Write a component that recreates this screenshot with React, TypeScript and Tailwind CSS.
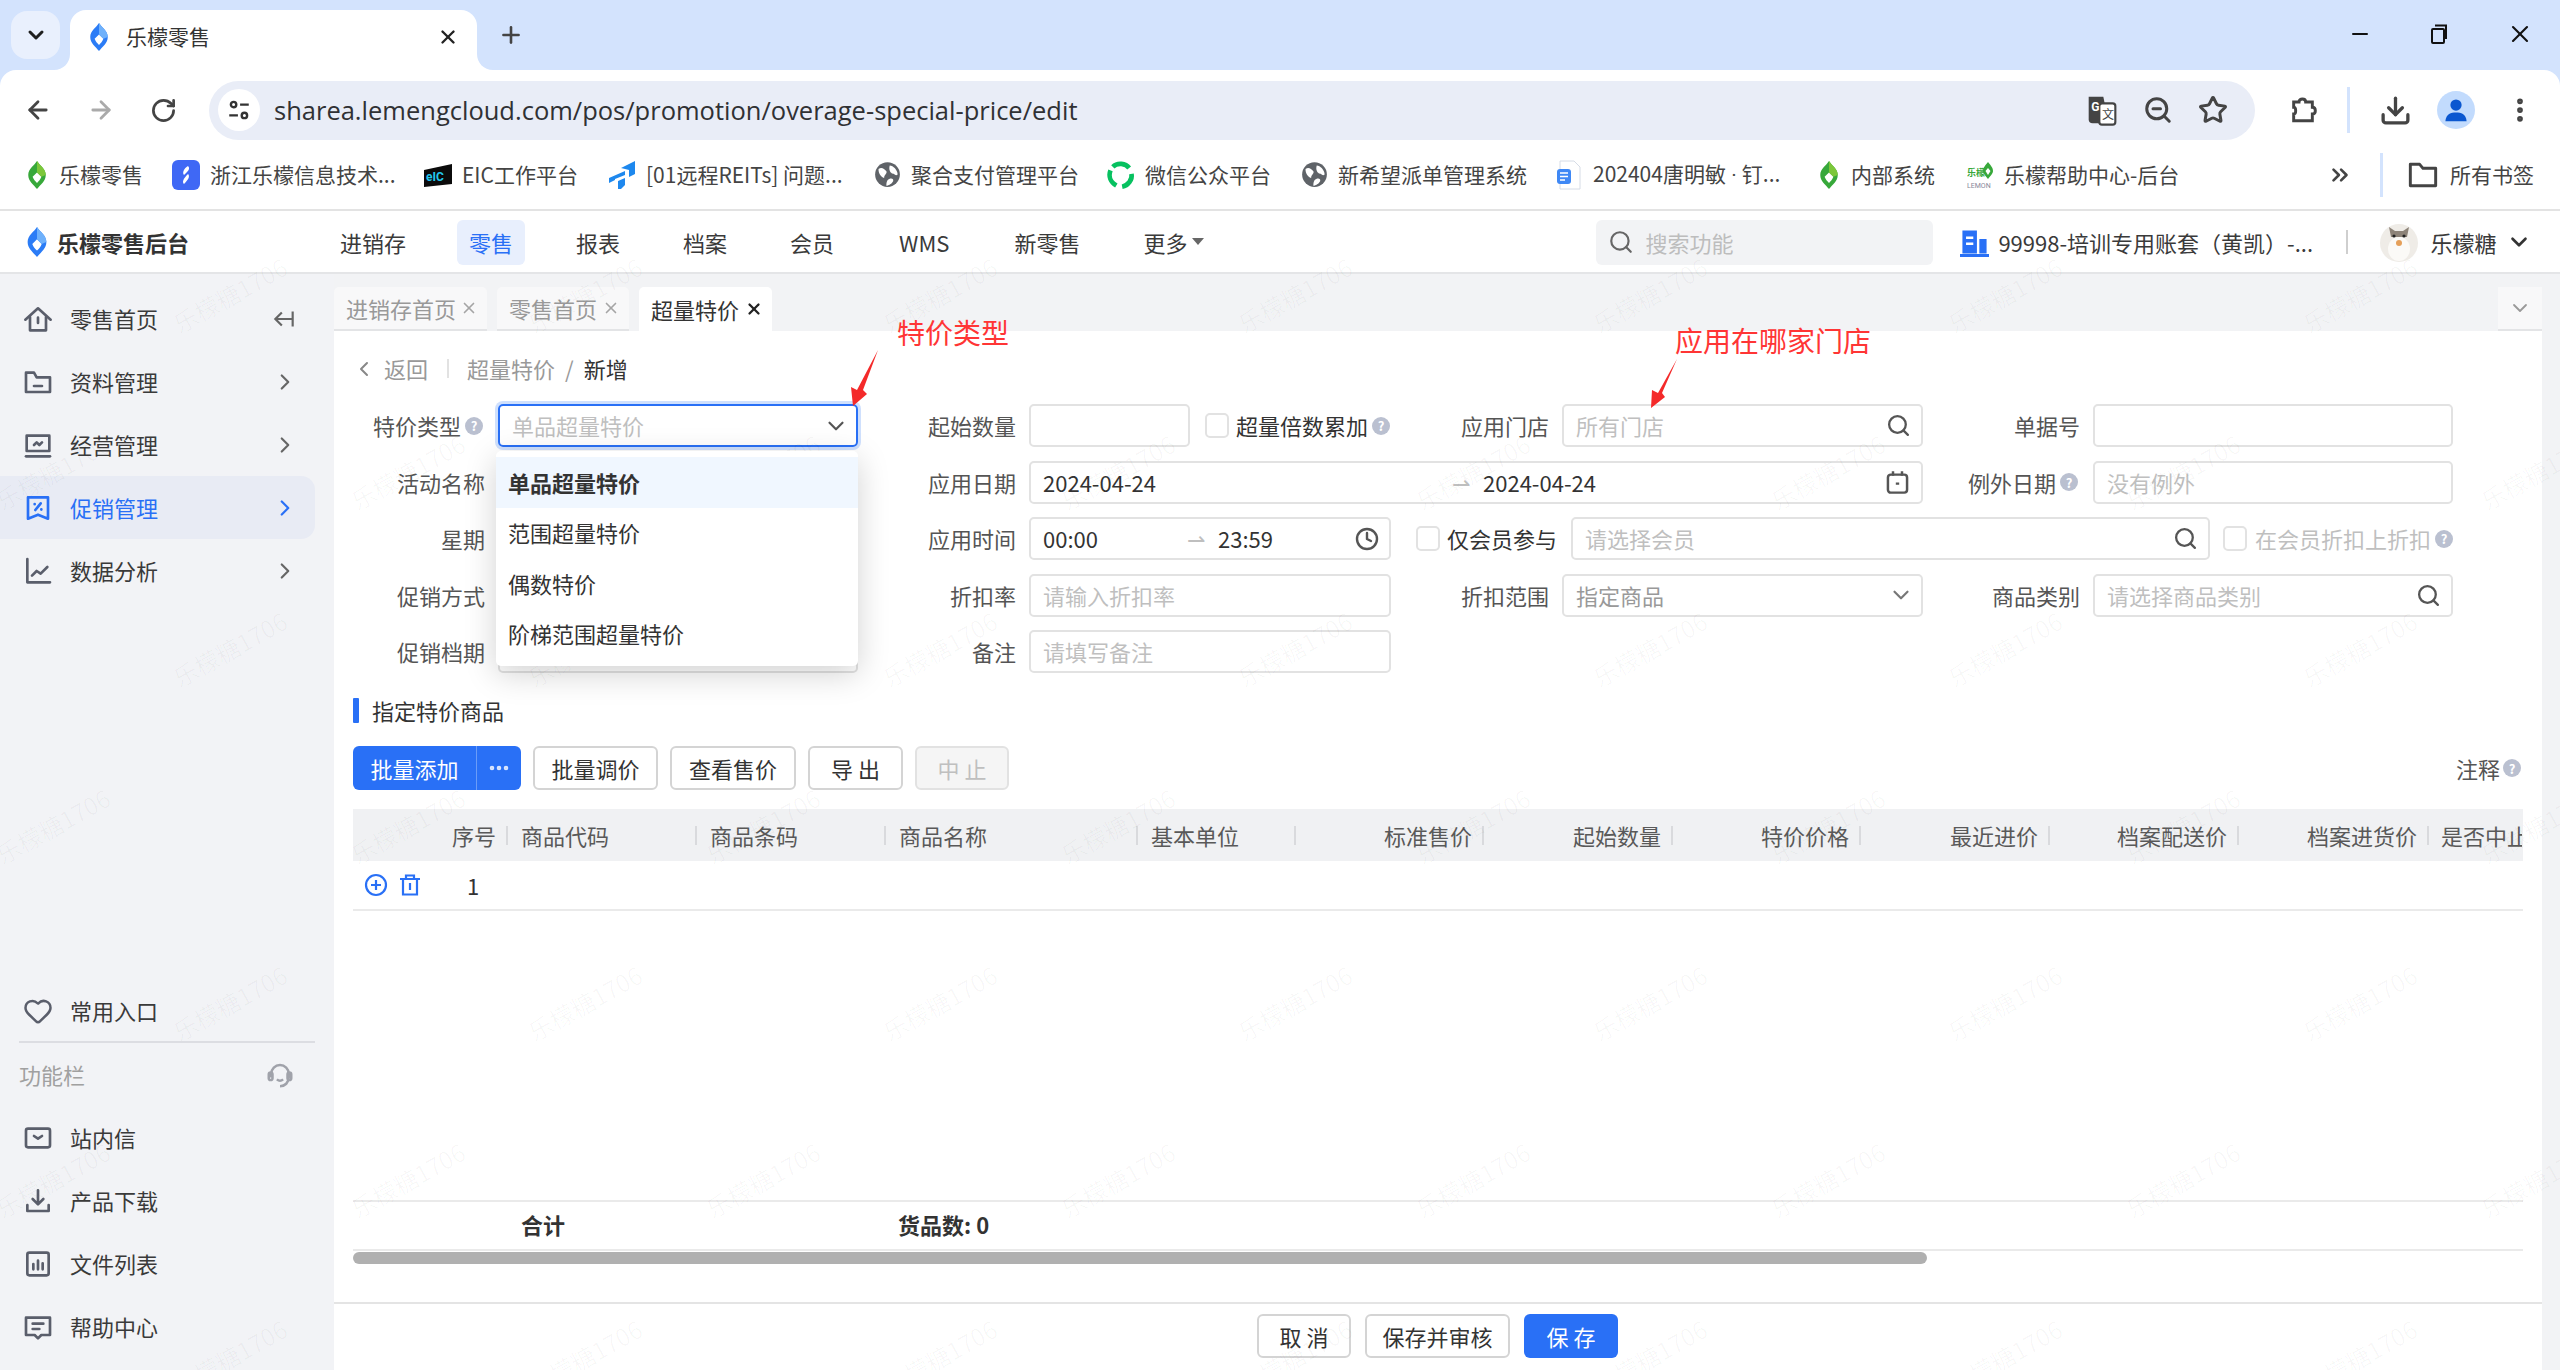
import {
  ArrowLeft,
  ArrowRight,
  ChevronDown,
  ChevronLeft,
  ChevronRight,
  ChevronsRight,
  Clock,
  Download,
  Ellipsis,
  EllipsisVertical,
  Heart,
  Minus,
  Plus,
  RotateCw,
  Search,
  Star,
  X,
  ZoomOut,
} from 'lucide-react'
import type { ReactNode } from 'react'

const GRAY = '#5a5e6b'

function Leaf({ color = '#2b7cf6', light = '#6fb1fb', className = '' }) {
  return (
    <svg viewBox="0 0 24 32" className={className}>
      <path
        fillRule="evenodd"
        fill={color}
        d="M12 0C15 5 22 9 22 16C22 23 16 27 12 32C8 27 2 23 2 16C2 9 9 5 12 0ZM12 13L7 18C8 21 10 23 12 25C14 23 16 21 17 18Z"
      />
      <path fill={light} d="M12 0C15 5 22 9 22 16L17 18L12 13L12 0Z" />
    </svg>
  )
}

function Globe() {
  return (
    <svg viewBox="0 0 24 24" className="h-[27px] w-[27px]">
      <circle cx="12" cy="12" r="11" fill="#5f6368" />
      <path fill="#fff" d="M4 7C7 5 9 7 11 9C12 11 9 12 9 15C6 14 4 11 4 7ZM14 4C17 4 21 8 21 12C19 14 19 11 16 11C14 10 13 7 14 4ZM12 17C14 15 18 15 17 18C16 20 13 22 11 22C11 20 11 19 12 17Z" />
    </svg>
  )
}

function Help() {
  return (
    <span className="flex h-[18px] w-[18px] shrink-0 items-center justify-center rounded-full bg-[#bac0d0] text-[13px] leading-none font-bold text-white">
      ?
    </span>
  )
}

function SideIcon({ children, color = GRAY }: { children: ReactNode; color?: string }) {
  return (
    <svg
      viewBox="0 0 24 24"
      fill="none"
      stroke={color}
      strokeWidth="2"
      strokeLinecap="round"
      strokeLinejoin="round"
      className="h-[32px] w-[32px] shrink-0"
    >
      {children}
    </svg>
  )
}

function SideItem({
  icon,
  label,
  arrow,
  active,
}: {
  icon: ReactNode
  label: string
  arrow?: boolean
  active?: boolean
}) {
  return (
    <div
      className={`flex h-[63px] w-[315px] items-center rounded-r-[14px] pl-[22px] ${
        active ? 'bg-[#e8ebf4] text-[#2970f6]' : 'text-[#3a3a3a]'
      }`}
    >
      {icon}
      <span className="ml-[16px] flex-1">{label}</span>
      {arrow && <ChevronRight size={26} strokeWidth={2} color={active ? '#2970f6' : '#666'} className="mr-[17px]" />}
    </div>
  )
}

function Sidebar() {
  return (
    <aside className="flex w-[334px] shrink-0 flex-col bg-[#f2f3f6] pt-[13px] pb-[12px] text-[22px]">
      <div className="flex h-[63px] w-[315px] items-center pl-[22px] text-[#3a3a3a]">
        <SideIcon>
          <path d="M2.5 12.5L12 4l9.5 8.5" />
          <path d="M6 10.5V20.5H18V10.5" />
          <path d="M12 11V15" />
        </SideIcon>
        <span className="ml-[16px] flex-1">零售首页</span>
        <svg viewBox="0 0 24 24" fill="none" stroke="#666" strokeWidth="2" className="mr-[18px] h-[26px] w-[26px]">
          <path d="M20 5V19M19 12H4M10 6L4 12L10 18" />
        </svg>
      </div>
      <SideItem
        arrow
        label="资料管理"
        icon={
          <SideIcon>
            <path d="M3 6V19.5H21V8.5H11L9 5H3Z" />
            <path d="M9 15H15" />
          </SideIcon>
        }
      />
      <SideItem
        arrow
        label="经营管理"
        icon={
          <SideIcon>
            <path d="M3.5 5H20.5V16.5H3.5Z" />
            <path d="M3 20.5H21" />
            <path d="M9 12L11 10L13 12L15 10" />
          </SideIcon>
        }
      />
      <SideItem
        arrow
        active
        label="促销管理"
        icon={
          <SideIcon color="#2970f6">
            <path d="M4.5 4H19.5V20L12 17L4.5 20Z" />
            <path d="M14 8.5L10 13.5" />
            <path d="M9.5 9V9.2M14.5 13V13.2" />
          </SideIcon>
        }
      />
      <SideItem
        arrow
        label="数据分析"
        icon={
          <SideIcon>
            <path d="M4 3V20.5H21" />
            <path d="M7.5 15.5L11 12L14 14L19 9" />
          </SideIcon>
        }
      />
      <div className="flex-1" />
      <SideItem
        label="常用入口"
        icon={
          <span className="flex h-[32px] w-[32px] items-center justify-center">
            <Heart size={30} strokeWidth={2} color={GRAY} />
          </span>
        }
      />
      <div className="mt-[-1px] ml-[19px] h-[2px] w-[296px] bg-[#dcdde2]" />
      <div className="flex h-[63px] w-[315px] items-center pl-[19px] text-[#a0a0a0]">
        <span className="flex-1">功能栏</span>
        <svg viewBox="0 0 24 24" fill="none" stroke="#a0a2aa" strokeWidth="2" className="mr-[20px] h-[30px] w-[30px]">
          <path d="M5 14V11A7 7 0 0 1 19 11V14C19 18 16 21 12 21" />
          <rect x="3" y="10" width="3" height="6" rx="1.5" />
          <rect x="18" y="10" width="3" height="6" rx="1.5" />
          <path d="M9.5 15.5C11 16.8 13 16.8 14.5 15.5" />
        </svg>
      </div>
      <SideItem
        label="站内信"
        icon={
          <SideIcon>
            <rect x="3" y="5" width="18" height="14" rx="1.5" />
            <path d="M9 10.5L12 12.5L15 10.5" />
          </SideIcon>
        }
      />
      <SideItem
        label="产品下载"
        icon={
          <SideIcon>
            <path d="M12 4V14M8 10.5L12 14.5L16 10.5" />
            <path d="M4 15V19.5H20V15" />
          </SideIcon>
        }
      />
      <SideItem
        label="文件列表"
        icon={
          <SideIcon>
            <rect x="4" y="3.5" width="16" height="17" rx="1.5" />
            <path d="M8.5 12V16M12 9.5V16M15.5 11.5V16" />
          </SideIcon>
        }
      />
      <SideItem
        label="帮助中心"
        icon={
          <SideIcon>
            <path d="M3 5H21V18H14.5L12 20.5L9.5 18H3Z" />
            <path d="M8 9.5H16M8 13.5H13" />
          </SideIcon>
        }
      />
    </aside>
  )
}

function TabStrip() {
  return (
    <div className="flex h-[70px] items-end bg-[#d3e3fd]">
      <div className="mb-[11px] ml-[11px] flex h-[48px] w-[49px] items-center justify-center rounded-[16px] bg-[#e9f0fd]">
        <ChevronDown size={24} strokeWidth={3} color="#1f1f1f" />
      </div>
      <div className="relative ml-[10px] flex h-[60px] w-[407px] items-center rounded-t-[16px] bg-white pb-[6px] pl-[17px] text-[21px] text-[#333]">
        <svg viewBox="0 0 16 16" className="absolute bottom-0 left-[-16px] h-[16px] w-[16px]">
          <path fill="#fff" d="M16 0V16H0C9 16 16 9 16 0Z" />
        </svg>
        <svg viewBox="0 0 16 16" className="absolute right-[-16px] bottom-0 h-[16px] w-[16px]">
          <path fill="#fff" d="M0 0V16H16C7 16 0 9 0 0Z" />
        </svg>
        <Leaf className="h-[28px] w-[24px]" />
        <span className="ml-[15px] flex-1">乐檬零售</span>
        <X size={22} strokeWidth={2.6} color="#222" className="mr-[18px]" />
      </div>
      <Plus size={26} strokeWidth={2.4} color="#444" className="mb-[22px] ml-[21px]" />
      <div className="flex-1" />
      <div className="mb-[22px] flex items-center text-[#111]">
        <Minus size={24} strokeWidth={2} />
        <svg viewBox="0 0 24 24" fill="none" stroke="#111" strokeWidth="2" className="ml-[55px] h-[24px] w-[24px]">
          <rect x="5" y="7" width="12" height="14" rx="1" />
          <path d="M8 3.5H19V17" />
        </svg>
        <X size={28} strokeWidth={1.8} className="mr-[26px] ml-[55px]" />
      </div>
    </div>
  )
}

function Toolbar() {
  return (
    <div className="flex h-[70px] items-center rounded-t-[16px] bg-white pt-[10px]">
      <ArrowLeft size={28} strokeWidth={2.4} color="#444" className="ml-[24px]" />
      <ArrowRight size={28} strokeWidth={2.4} color="#aaa" className="ml-[35px]" />
      <RotateCw size={27} strokeWidth={2.4} color="#444" className="ml-[35px]" />
      <div className="ml-[32px] flex h-[59px] w-[2046px] items-center rounded-full bg-[#e9edf7] pl-[9px]">
        <span className="flex h-[42px] w-[42px] items-center justify-center rounded-full bg-white">
          <svg viewBox="0 0 24 24" fill="none" stroke="#333" strokeWidth="2.2" className="h-[26px] w-[26px]">
            <circle cx="7" cy="7" r="2.5" />
            <path d="M13 7H21M3 17H11" />
            <circle cx="17" cy="17" r="2.5" />
          </svg>
        </span>
        <span className="ml-[14px] flex-1 font-['Open_Sans',sans-serif] text-[25.5px] text-[#303134]">
          sharea.lemengcloud.com/pos/promotion/overage-special-price/edit
        </span>
        <svg viewBox="0 0 24 24" className="h-[32px] w-[32px]">
          <path fill="#444" d="M2 2H13L17 22H5C3 22 2 21 2 19Z" />
          <rect x="10" y="7" width="12" height="16" rx="2" fill="#fff" stroke="#444" strokeWidth="1.6" />
          <text x="4" y="13" fontSize="9" fontWeight="700" fill="#fff" fontFamily="Roboto">G</text>
          <text x="12" y="19" fontSize="9" fill="#444" fontFamily="Noto Sans CJK SC">文</text>
        </svg>
        <ZoomOut size={30} strokeWidth={2.4} color="#444" className="ml-[25px]" />
        <Star size={30} strokeWidth={2.4} color="#444" className="mr-[27px] ml-[25px]" />
      </div>
      <svg viewBox="0 0 24 24" fill="none" stroke="#444" strokeWidth="2.2" className="ml-[32px] h-[32px] w-[32px]">
        <path d="M5 6H9C9 3 14 3 14 6H19V10C22 10 22 15 19 15V20H5V15C7 15 7 10 5 10Z" />
      </svg>
      <div className="ml-[28px] h-[46px] w-[3px] bg-[#d3e3fd]" />
      <Download size={33} strokeWidth={2.4} color="#444" className="ml-[29px]" />
      <span className="ml-[25px] flex h-[38px] w-[38px] items-center justify-center rounded-full bg-[#c2dbfd]">
        <svg viewBox="0 0 24 24" className="h-[30px] w-[30px]" fill="#0b57d0">
          <circle cx="12" cy="8" r="4.5" />
          <path d="M3.5 21C4 15 8 14 12 14C16 14 20 15 20.5 21Z" />
        </svg>
      </span>
      <EllipsisVertical size={30} strokeWidth={2.6} color="#444" className="ml-[30px]" />
    </div>
  )
}

const bookmarks: { text: ReactNode; width: string; icon: ReactNode; box: string }[] = [
  { text: '乐檬零售', width: 'w-[147px]', box: 'w-[24px]', icon: <Leaf color="#37a83a" light="#7cc73a" className="h-[28px] w-[22px]" /> },
  {
    text: '浙江乐檬信息技术...',
    width: 'w-[252px]',
    box: 'w-[28px]',
    icon: (
      <span className="flex h-[30px] w-[28px] items-center justify-center rounded-[6px] bg-[#3f68f5]">
        <svg viewBox="0 0 16 20" className="h-[20px] w-[16px]">
          <path fill="#fff" d="M10 1C12 3 11 5 9 7L6 10C4 8 6 3 10 1ZM10 9C12 11 11 14 6 19C4 17 5 14 10 9Z" />
        </svg>
      </span>
    ),
  },
  {
    text: 'EIC工作平台',
    width: 'w-[184px]',
    box: 'w-[28px]',
    icon: (
      <svg viewBox="0 0 28 24" className="h-[24px] w-[28px]">
        <path fill="#0b0b0b" d="M0 7L28 1V21L0 24Z" />
        <text x="2" y="18" fontSize="12" fontWeight="700" fill="#22c8ee" fontFamily="Roboto">eIC</text>
      </svg>
    ),
  },
  {
    text: '[01远程REITs] 问题...',
    width: 'w-[265px]',
    box: 'w-[28px]',
    icon: (
      <svg viewBox="0 0 26 28" className="h-[28px] w-[26px]">
        <path fill="#1e88ee" d="M12 7L26 0V13L20 16V9ZM0 17L16 10V14L6 18V19L0 22ZM9 20L16 17V24L12 28H9Z" />
      </svg>
    ),
  },
  { text: '聚合支付管理平台', width: 'w-[234px]', box: 'w-[28px]', icon: <Globe /> },
  {
    text: '微信公众平台',
    width: 'w-[193px]',
    box: 'w-[28px]',
    icon: (
      <svg viewBox="0 0 24 24" fill="none" stroke="#07c160" strokeWidth="4" className="h-[28px] w-[28px]">
        <path d="M5 5C9 1 16 2 19 6" />
        <path d="M21 11C22 16 18 21 13 22" />
        <path d="M8 21C3 18 1 13 3 8" />
      </svg>
    ),
  },
  { text: '新希望派单管理系统', width: 'w-[255px]', box: 'w-[28px]', icon: <Globe /> },
  {
    text: (
      <>
        202404唐明敏<span className="font-['Roboto',sans-serif]"> · </span>钉...
      </>
    ),
    width: 'w-[262px]',
    box: 'w-[28px]',
    icon: (
      <svg viewBox="0 0 24 30" className="h-[30px] w-[24px]">
        <path fill="#fff" stroke="#d6dce6" d="M3 1H17L23 7V29H3Z" />
        <rect x="0" y="9" width="14" height="15" rx="3" fill="#3f88f5" />
        <path stroke="#fff" strokeWidth="1.6" d="M3 13H11M3 16.5H11M3 20H8" />
      </svg>
    ),
  },
  { text: '内部系统', width: 'w-[149px]', box: 'w-[24px]', icon: <Leaf color="#37a83a" light="#7cc73a" className="h-[28px] w-[22px]" /> },
  {
    text: '乐檬帮助中心-后台',
    width: 'w-[365px]',
    box: 'w-[28px]',
    icon: (
      <svg viewBox="0 0 26 28" className="h-[28px] w-[26px]">
        <text x="0" y="15" fontSize="9" fontWeight="700" fill="#37a83a" fontFamily="Noto Sans CJK SC">乐檬</text>
        <path fill="#37a83a" fillRule="evenodd" d="M21 1C23 4 26 6 26 10C26 13 23 15 21 18C19 15 16 13 16 10C16 6 19 4 21 1ZM21 7L18.5 10L21 14L23.5 10Z" />
        <text x="0" y="27" fontSize="7" fill="#889" fontFamily="Roboto">LEMON</text>
      </svg>
    ),
  },
]

function Bookmarks() {
  return (
    <div className="flex h-[71px] items-center border-b-2 border-[#e3e3e3] bg-white pl-[25px] text-[21px] text-[#444]">
      {bookmarks.map((b, i) => (
        <div key={i} className={`flex items-center ${b.width}`}>
          <span className={`flex shrink-0 items-center justify-center ${b.box}`}>{b.icon}</span>
          <span className="ml-[10px] whitespace-nowrap">{b.text}</span>
        </div>
      ))}
      <ChevronsRight size={26} strokeWidth={2.4} color="#444" className="ml-[-4px]" />
      <div className="ml-[27px] h-[44px] w-[3px] bg-[#d3e3fd]" />
      <svg viewBox="0 0 24 24" fill="none" stroke="#444" strokeWidth="2.2" className="ml-[24px] h-[32px] w-[32px]">
        <path d="M2.5 4H9.5L12 7H21.5V20H2.5Z" strokeLinejoin="round" />
      </svg>
      <span className="ml-[11px] whitespace-nowrap">所有书签</span>
    </div>
  )
}

function AppHeader() {
  const nav = ['进销存', '零售', '报表', '档案', '会员']
  return (
    <header className="flex h-[63px] items-center border-b-2 border-[#e4e5e7] bg-white pt-[1px] text-[22px] text-[#3a3a3a]">
      <Leaf className="ml-[24px] h-[30px] w-[26px]" />
      <span className="ml-[7px] w-[271px] font-bold whitespace-nowrap text-[#333]">乐檬零售后台</span>
      <nav className="flex items-center gap-[39px]">
        {nav.map((n) => (
          <span
            key={n}
            className={`flex h-[45px] items-center rounded-[6px] px-[12px] ${n === '零售' ? 'bg-[#e8effd] text-[#2970f6]' : ''}`}
          >
            {n}
          </span>
        ))}
        <span className="flex h-[45px] items-center px-[14px]">WMS</span>
        <span className="flex h-[45px] items-center px-[12px]">新零售</span>
        <span className="flex h-[45px] items-center pl-[12px]">
          更多
          <span className="mt-[-2px] ml-[5px] h-0 w-0 border-x-[6px] border-t-[7px] border-x-transparent border-t-[#666]" />
        </span>
      </nav>
      <div className="ml-[392px] flex h-[45px] w-[337px] items-center rounded-[6px] bg-[#f2f3f5] pl-[12px] text-[#bdbdbd]">
        <Search size={26} strokeWidth={2} color="#666" />
        <span className="ml-[11px]">搜索功能</span>
      </div>
      <svg viewBox="0 0 24 24" className="ml-[27px] h-[29px] w-[29px]">
        <path fill="#2970f6" d="M2 2H14V21H2ZM16 9H22V21H16ZM0 21.5H24V24H0Z" />
        <path fill="#fff" d="M5 7H11V9H5ZM5 12H11V14H5Z" />
      </svg>
      <span className="ml-[9px] w-[314px] whitespace-nowrap">99998-培训专用账套（黄凯）-...</span>
      <div className="ml-[34px] h-[24px] w-[2px] bg-[#cfcfcf]" />
      <svg viewBox="0 0 38 40" className="ml-[32px] h-[40px] w-[38px]">
        <ellipse cx="19" cy="21" rx="19" ry="19" fill="#efece7" />
        <path fill="#8d8378" d="M9 5L15 9H23L29 5L27 15H11Z" />
        <ellipse cx="19" cy="27" rx="11" ry="12" fill="#fbfaf7" />
        <circle cx="14" cy="14" r="1.6" fill="#222" />
        <circle cx="24" cy="14" r="1.6" fill="#222" />
        <circle cx="19" cy="21" r="3" fill="#e5a05a" />
      </svg>
      <span className="ml-[12px]">乐檬糖</span>
      <ChevronDown size={26} strokeWidth={2.4} color="#333" className="ml-[10px]" />
    </header>
  )
}

function PageTab({ label, active, width }: { label: string; active?: boolean; width: string }) {
  return (
    <div
      className={`flex h-[44px] items-center rounded-t-[5px] pl-[12px] ${width} ${
        active ? 'bg-white text-[#333]' : 'border-b-2 border-[#e3e4e6] bg-[#f8f8f9] text-[#999]'
      }`}
    >
      <span className="flex-1 whitespace-nowrap">{label}</span>
      <X size={18} strokeWidth={active ? 3 : 2.2} color={active ? '#222' : '#a5a5a5'} className="mr-[9px]" />
    </div>
  )
}

function Field({ children, className = '', focus }: { children?: ReactNode; className?: string; focus?: boolean }) {
  return (
    <div
      className={`flex h-[43px] min-w-0 items-center rounded-[5px] border-2 pr-[10px] pl-[12px] ${
        focus ? 'border-[#2970f6] shadow-[0_0_0_3px_#cfe0fd]' : 'border-[#e2e2e2]'
      } ${className}`}
    >
      {children}
    </div>
  )
}

function Ph({ children }: { children: ReactNode }) {
  return <span className="flex-1 whitespace-nowrap text-[#bfbfbf]">{children}</span>
}

function Label({ children, help }: { children: string; help?: boolean }) {
  return (
    <div className={`flex h-[43px] items-center justify-end gap-[4px] text-[#555] ${help ? 'pr-[15px]' : 'pr-[13px]'}`}>
      {children}
      {help && <Help />}
    </div>
  )
}

function Box({ className = '' }: { className?: string }) {
  return <span className={`block h-[25px] w-[24px] shrink-0 rounded-[5px] border-2 border-[#e2e2e2] bg-white ${className}`} />
}

function SearchIcon() {
  return <Search size={25} strokeWidth={2.2} color="#555" className="shrink-0" />
}

function Form() {
  return (
    <div className="relative grid grid-cols-[164px_360px_171px_362px_171px_361px_170px_360px] gap-y-[13.5px] text-[22px]">
      <Label help>特价类型</Label>
      <Field focus>
        <Ph>单品超量特价</Ph>
        <ChevronDown size={26} strokeWidth={2} color="#555" className="mr-[-3px]" />
      </Field>
      <Label>起始数量</Label>
      <div className="flex items-center">
        <Field className="w-[161px] shrink-0" />
        <Box className="ml-[15px]" />
        <span className="ml-[7px] whitespace-nowrap text-[#333]">超量倍数累加</span>
        <span className="ml-[4px]">
          <Help />
        </span>
      </div>
      <Label>应用门店</Label>
      <Field>
        <Ph>所有门店</Ph>
        <SearchIcon />
      </Field>
      <Label>单据号</Label>
      <Field />

      <Label>活动名称</Label>
      <Field />
      <Label>应用日期</Label>
      <Field className="col-span-3">
        <span className="w-[409px]">2024-04-24</span>
        <span className="text-[#bfbfbf]">⇀</span>
        <span className="ml-[13px] flex-1">2024-04-24</span>
        <svg viewBox="0 0 24 24" fill="none" stroke="#555" strokeWidth="2.2" className="h-[27px] w-[27px]">
          <rect x="3.5" y="5" width="17" height="16" rx="2.5" />
          <path d="M8 2V6M16 2V6M10.5 13H13.5" />
        </svg>
      </Field>
      <Label help>例外日期</Label>
      <Field>
        <Ph>没有例外</Ph>
      </Field>

      <Label>星期</Label>
      <Field />
      <Label>应用时间</Label>
      <Field>
        <span className="w-[144px]">00:00</span>
        <span className="text-[#bfbfbf]">⇀</span>
        <span className="ml-[13px] flex-1">23:59</span>
        <Clock size={24} strokeWidth={2.4} color="#555" />
      </Field>
      <div className="col-span-4 flex items-center pl-[25px]">
        <Box />
        <span className="ml-[7px] w-[124px] whitespace-nowrap text-[#333]">仅会员参与</span>
        <Field className="w-[639px]">
          <Ph>请选择会员</Ph>
          <SearchIcon />
        </Field>
        <Box className="ml-[13px]" />
        <span className="ml-[8px] whitespace-nowrap text-[#bfbfbf]">在会员折扣上折扣</span>
        <span className="ml-[4px]">
          <Help />
        </span>
      </div>

      <Label>促销方式</Label>
      <Field />
      <Label>折扣率</Label>
      <Field>
        <Ph>请输入折扣率</Ph>
      </Field>
      <Label>折扣范围</Label>
      <Field>
        <span className="flex-1 text-[#999]">指定商品</span>
        <ChevronDown size={26} strokeWidth={2} color="#777" className="mr-[-3px]" />
      </Field>
      <Label>商品类别</Label>
      <Field>
        <Ph>请选择商品类别</Ph>
        <SearchIcon />
      </Field>

      <Label>促销档期</Label>
      <Field />
      <Label>备注</Label>
      <Field>
        <Ph>请填写备注</Ph>
      </Field>

      <div className="absolute top-[47px] left-[162px] z-30 w-[362px] rounded-[5px] bg-white pt-[6px] pb-[7px] text-[#333] shadow-[0_8px_32px_rgba(0,0,0,0.18)]">
        <div className="flex h-[50.5px] items-center bg-[#f0f7ff] pl-[12px] font-bold">单品超量特价</div>
        <div className="flex h-[50.5px] items-center pl-[12px]">范围超量特价</div>
        <div className="flex h-[50.5px] items-center pl-[12px]">偶数特价</div>
        <div className="flex h-[50.5px] items-center pl-[12px]">阶梯范围超量特价</div>
      </div>
    </div>
  )
}

function Btn({ children, width, disabled }: { children: string; width: string; disabled?: boolean }) {
  return (
    <span
      className={`flex h-[44px] items-center justify-center rounded-[6px] border-2 ${width} ${
        disabled ? 'border-[#e2e2e2] bg-[#f5f5f5] text-[#bfbfbf]' : 'border-[#d4d4d4] bg-white text-[#333]'
      }`}
    >
      {children}
    </span>
  )
}

function HeadCell({ children, width, right }: { children: string; width: string; right?: boolean }) {
  return (
    <div className={`flex shrink-0 items-center ${width}`}>
      <span className={`min-w-0 flex-1 overflow-hidden whitespace-nowrap ${right ? 'pr-[10px] text-right' : 'pl-[13px]'}`}>{children}</span>
      <span className="h-[19px] w-[2px] shrink-0 bg-[#d9dadd]" />
    </div>
  )
}

function Content() {
  return (
    <div className="flex min-h-0 flex-1 flex-col bg-white text-[22px]">
      <div className="mt-[22px] mb-[20px] flex h-[31px] items-center pl-[18px] text-[#999]">
        <ChevronLeft size={24} strokeWidth={2} color="#888" />
        <span className="ml-[8px]">返回</span>
        <span className="ml-[19px] h-[19px] w-[2px] bg-[#e2e2e2]" />
        <span className="ml-[18px]">超量特价</span>
        <span className="mx-[10px]">/</span>
        <span className="text-[#333]">新增</span>
      </div>
      <Form />
      <div className="mt-[25px] ml-[19px] flex h-[25px] items-center text-[#333]">
        <span className="h-[25px] w-[6px] rounded-[1px] bg-[#2970f6]" />
        <span className="ml-[13px]">指定特价商品</span>
      </div>
      <div className="mt-[23px] flex items-center gap-[12px] px-[19px]">
        <div className="flex h-[44px] w-[168px] items-center rounded-[6px] bg-[#2970f6] text-white">
          <span className="flex w-[123px] shrink-0 justify-center">批量添加</span>
          <span className="h-[44px] w-[1px] shrink-0 bg-[#6a9cf8]" />
          <span className="flex flex-1 justify-center">
            <Ellipsis size={24} strokeWidth={2.6} color="#dbe6fd" />
          </span>
        </div>
        <Btn width="w-[125px]">批量调价</Btn>
        <Btn width="w-[126px]">查看售价</Btn>
        <Btn width="w-[95px]">导 出</Btn>
        <Btn width="w-[94px]" disabled>
          中 止
        </Btn>
        <div className="flex-1" />
        <span className="text-[#555]">注释</span>
        <span className="mr-[2px] ml-[-9px]">
          <Help />
        </span>
      </div>
      <div className="mx-[19px] mt-[19px] flex min-h-0 flex-1 flex-col">
        <div className="flex h-[52px] shrink-0 items-center overflow-hidden bg-[#f0f1f3] text-[#595959]">
          <HeadCell width="w-[155px]" right>序号</HeadCell>
          <HeadCell width="w-[189px]">商品代码</HeadCell>
          <HeadCell width="w-[189px]">商品条码</HeadCell>
          <HeadCell width="w-[252px]">商品名称</HeadCell>
          <HeadCell width="w-[158px]">基本单位</HeadCell>
          <HeadCell width="w-[188px]" right>标准售价</HeadCell>
          <HeadCell width="w-[189px]" right>起始数量</HeadCell>
          <HeadCell width="w-[188px]" right>特价价格</HeadCell>
          <HeadCell width="w-[189px]" right>最近进价</HeadCell>
          <HeadCell width="w-[189px]" right>档案配送价</HeadCell>
          <HeadCell width="w-[190px]" right>档案进货价</HeadCell>
          <span className="w-[93px] shrink-0 overflow-hidden pl-[12px] whitespace-nowrap">是否中止</span>
        </div>
        <div className="flex h-[50px] shrink-0 items-center border-b-2 border-[#eaeaea] text-[#333]">
          <svg viewBox="0 0 24 24" fill="none" stroke="#2970f6" strokeWidth="2.2" className="ml-[11px] h-[24px] w-[24px]">
            <circle cx="12" cy="12" r="10" />
            <path d="M12 7V17M7 12H17" />
          </svg>
          <svg viewBox="0 0 24 24" fill="none" stroke="#2970f6" strokeWidth="2.2" className="ml-[10px] h-[24px] w-[24px]">
            <path d="M2 6H22M8 6V2.5H16V6M5 6V21.5H19V6M12 10V17" />
          </svg>
          <span className="ml-[45px]">1</span>
        </div>
        <div className="flex-1" />
        <div className="flex h-[51px] shrink-0 items-center border-y-2 border-[#eaeaea] pb-[2px] font-bold text-[#333]">
          <span className="w-[545px] pl-[168px]">合计</span>
          <span>货品数: 0</span>
        </div>
        <div className="mt-[1px] h-[12px] w-[1574px] shrink-0 rounded-full bg-[#b0b0b0]" />
      </div>
      <div className="mt-[38px] flex h-[68px] shrink-0 items-start gap-[14px] border-t-2 border-[#e4e4e4] pt-[10px] pl-[923px]">
        <Btn width="w-[94px]">取 消</Btn>
        <Btn width="w-[145px]">保存并审核</Btn>
        <span className="flex h-[44px] w-[94px] items-center justify-center rounded-[6px] bg-[#2970f6] text-white">保 存</span>
      </div>
    </div>
  )
}

const marks = Array.from({ length: 7 }).flatMap((_, row) =>
  Array.from({ length: 8 }).map((_, col) => ({
    left: (row % 2 === 0 ? 230 : 53) + col * 355,
    top: 295 + row * 177,
  })),
)

export default function App() {
  return (
    <div className="relative flex h-[1370px] w-[2560px] flex-col overflow-hidden bg-[#d3e3fd] text-[22px] text-[#333] [font-family:'Noto_Sans_CJK_SC','Noto_Sans',sans-serif]">
      <TabStrip />
      <Toolbar />
      <Bookmarks />
      <AppHeader />
      <div className="flex min-h-0 flex-1 bg-[#f2f3f5]">
        <Sidebar />
        <main className="flex min-w-0 flex-1 flex-col pt-[13px] pr-[18px]">
          <div className="flex h-[44px] shrink-0 gap-[10px]">
            <PageTab width="w-[153px]" label="进销存首页" />
            <PageTab width="w-[132px]" label="零售首页" />
            <PageTab width="w-[133px]" active label="超量特价" />
            <div className="flex-1" />
            <div className="flex h-[44px] w-[44px] items-center justify-center border-b-2 border-[#e3e4e6] bg-[#f8f8f9]">
              <ChevronDown size={24} strokeWidth={1.8} color="#999" />
            </div>
          </div>
          <Content />
        </main>
      </div>

      <div className="pointer-events-none absolute inset-0 z-20">
        {marks.map((m) => (
          <span
            key={`${m.left}-${m.top}`}
            className="absolute -translate-x-1/2 -translate-y-1/2 -rotate-[29deg] text-[24px] whitespace-nowrap text-black/[0.03]"
            style={{ left: m.left, top: m.top }}
          >
            乐檬糖1706
          </span>
        ))}
      </div>

      <span className="absolute top-[312px] left-[897px] z-40 text-[28px] leading-[40px] text-[#ff3535]">特价类型</span>
      <span className="absolute top-[320px] left-[1675px] z-40 text-[28px] leading-[40px] text-[#ff3535]">应用在哪家门店</span>
      <svg viewBox="0 0 2560 1370" className="pointer-events-none absolute inset-0 z-40 h-[1370px] w-[2560px]">
        <path fill="#f42a2a" d="M878 350L863 390L867 394L853 406L851 387L857 390Z" />
        <path fill="#f42a2a" d="M1677 359L1662 393L1665 397L1651 408L1652 390L1658 393Z" />
      </svg>
    </div>
  )
}
